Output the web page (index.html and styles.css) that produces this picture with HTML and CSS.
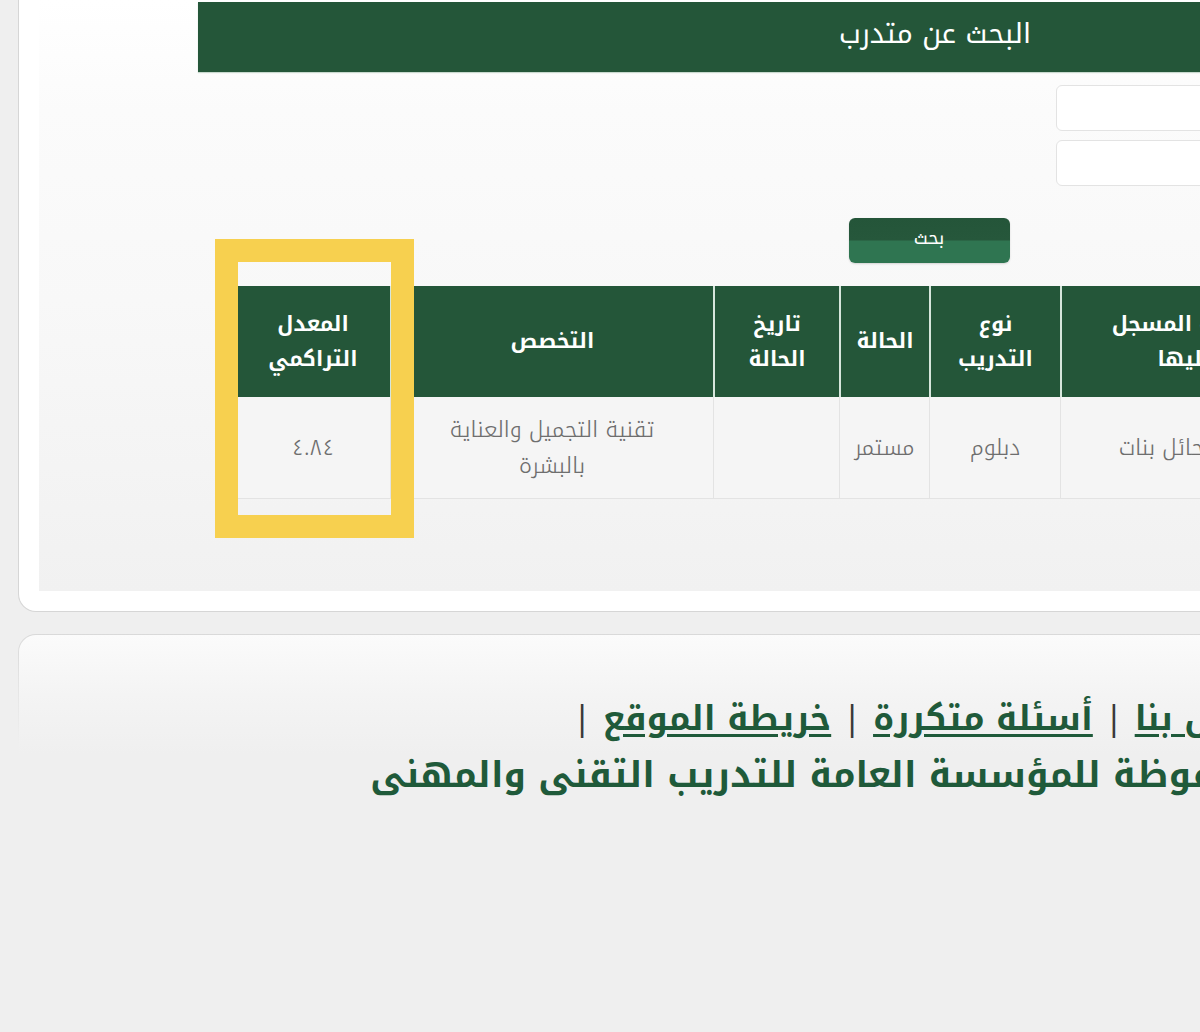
FILE: index.html
```html
<!DOCTYPE html>
<html lang="ar">
<head>
<meta charset="utf-8">
<title>البحث عن متدرب</title>
<link rel="stylesheet" href="styles.css">
</head>
<body>
<div class="page">
  <section class="card">
    <div class="card-inner" dir="rtl">
      <div class="content">
        <h1 class="title-bar">البحث عن متدرب</h1>
        <form class="search-form">
          <div class="form-row"><label class="form-label">رقم المتدرب</label><input class="form-input" type="text"></div>
          <div class="form-row"><label class="form-label">رقم الهوية</label><input class="form-input" type="text"></div>
          <button type="button" class="search-btn">بحث</button>
        </form>
        <div class="table-wrap">
          <table class="results">
            <colgroup>
              <col class="c-id"><col class="c-name"><col class="c-unit"><col class="c-type"><col class="c-status"><col class="c-date"><col class="c-major"><col class="c-gpa">
            </colgroup>
            <thead>
              <tr>
                <th>رقم<br>المتدرب</th>
                <th>اسم المتدرب</th>
                <th>الجهة المسجل<br>عليها</th>
                <th>نوع<br>التدريب</th>
                <th>الحالة</th>
                <th>تاريخ<br>الحالة</th>
                <th>التخصص</th>
                <th>المعدل<br>التراكمي</th>
              </tr>
            </thead>
            <tbody>
              <tr>
                <td>٤٤١١٠٠٠٠</td>
                <td>متدربة</td>
                <td>كلية حائل بنات</td>
                <td>دبلوم</td>
                <td>مستمر</td>
                <td></td>
                <td>تقنية التجميل والعناية<br>بالبشرة</td>
                <td>٤.٨٤</td>
              </tr>
            </tbody>
          </table>
          <div class="highlight"></div>
        </div>
      </div>
    </div>
  </section>
  <footer class="footer">
    <div class="footer-inner" dir="rtl">
      <p class="footer-links">| <a href="#">اتصل بنا</a> | <a href="#">أسئلة متكررة</a> | <a href="#">خريطة الموقع</a> |</p>
      <p class="footer-copy">جميع الحقوق محفوظة للمؤسسة العامة للتدريب التقنى والمهنى</p>
    </div>
  </footer>
</div>
</body>
</html>
```
FILE: styles.css
```css
html, body {
  margin: 0;
  padding: 0;
  overflow: hidden;
  background: #efefef;
}
body {
  font-family: "Noto Kufi Arabic", "Noto Sans Arabic", "DejaVu Sans", "Noto Sans", sans-serif;
  width: 1200px;
  height: 1032px;
}
.page {
  width: 1834px;
  padding-left: 18px;
}
.card {
  background: #fff;
  border: 1px solid #d6d6d6;
  border-top: none;
  border-radius: 0 0 18px 18px;
  padding: 0 20px 20px;
}
.card-inner {
  background: linear-gradient(#ffffff 0, #fbfbfb 110px, #f8f8f8 300px, #f1f1f1 100%);
  padding: 2px 159px 92px;
}
.content {
  display: flex;
  flex-direction: column;
}
.title-bar {
  margin: 0;
  height: 70px;
  padding-bottom: 8px;
  box-sizing: border-box;
  background: #245639;
  color: #fff;
  font-weight: normal;
  font-size: 28px;
  display: flex;
  align-items: center;
  justify-content: center;
  box-shadow: 0 1px 1px #c9d9cf;
}
.search-form {
  display: flex;
  flex-direction: column;
  align-items: stretch;
  padding-top: 13px;
}
.form-row {
  display: flex;
  margin-bottom: 9px;
}
.form-label {
  width: 200px;
  font-size: 18px;
  color: #555;
  display: flex;
  align-items: center;
}
.form-input {
  width: 416px;
  height: 46px;
  box-sizing: border-box;
  border: 1px solid #e3e3e3;
  border-radius: 6px;
  background: #fff;
}
.search-btn {
  align-self: center;
  margin-top: 23px;
  margin-right: 12px;
  width: 161px;
  height: 45px;
  border: none;
  border-radius: 6px;
  background: linear-gradient(#245539 0, #26573b 48%, #2f7551 52%, #2f7551 100%);
  color: #fff;
  font-family: inherit;
  font-size: 18px;
  padding-bottom: 6px;
  box-shadow: 0 1px 2px rgba(0,0,0,0.15);
}
.table-wrap {
  position: relative;
  margin: 23px 38px 0;
}
.results {
  width: 100%;
  table-layout: fixed;
  border-collapse: separate;
  border-spacing: 0;
}
.c-id { width: 124px; }
.c-name { width: 200px; }
.c-unit { width: 250px; }
.c-type { width: 131px; }
.c-status { width: 90px; }
.c-date { width: 126px; }
.c-major { width: 323px; }
.c-gpa { width: 154px; }
.results th {
  height: 111px;
  background: #245639;
  color: #fff;
  font-size: 21px;
  font-weight: bold;
  line-height: 35px;
  padding: 0 4px;
  border-left: 2px solid #d6e6dc;
  box-sizing: border-box;
}
.results th:last-child { border-left: none; }
.results td {
  height: 101px;
  background: #f5f5f5;
  color: #6e6e6e;
  font-size: 22px;
  font-weight: 300;
  line-height: 36px;
  text-align: center;
  padding: 0 4px;
  border-left: 1px solid #e3e3e3;
  border-bottom: 1px solid #e3e3e3;
}
.results td:last-child { border-left: none; }
.highlight {
  position: absolute;
  left: -21px;
  top: -47px;
  width: 199px;
  height: 299px;
  box-sizing: border-box;
  border: 23px solid #f7d04f;
  pointer-events: none;
}
.footer {
  margin-top: 22px;
  padding: 1px 0 0 1px;
  border-radius: 18px 18px 0 0;
  background: linear-gradient(#d9d9d9 0, #e6e6e6 60px, #efefef 110px);
}
.footer-inner {
  border-radius: 17px 17px 0 0;
  background: linear-gradient(#fbfbfb 0, #f4f4f4 60px, #efefef 120px);
  padding: 56px 0 60px;
  text-align: center;
  color: #1f5a3a;
  font-weight: bold;
}
.footer-links {
  margin: 0;
  font-size: 34px;
  line-height: 56px;
  color: #3a3a3a;
  font-weight: normal;
}
.footer-links a {
  color: #1f5a3a;
  font-weight: bold;
  text-decoration: underline;
  text-underline-offset: 4px;
}
.footer-copy {
  margin: 0;
  font-size: 36px;
  line-height: 56px;
}
```
